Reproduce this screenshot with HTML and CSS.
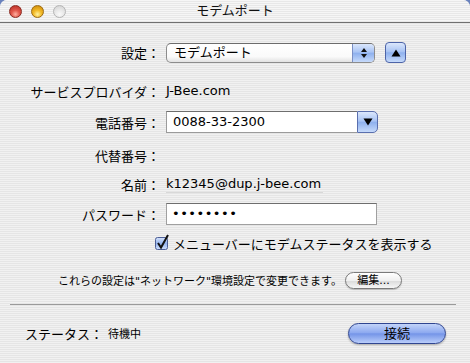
FILE: index.html
```html
<!DOCTYPE html>
<html lang="ja">
<head>
  <meta charset="UTF-8" />
  <title>モデムポート</title>
  <link rel="stylesheet" href="styles.css">
</head>
<body>
  <div class="window">
    <div class="titlebar">
      <div class="lights">
        <span class="light red"></span>
        <span class="light yellow"></span>
        <span class="light off"></span>
      </div>
      <div class="title">モデムポート</div>
      <div></div>
    </div>

    <div class="content">
      <div class="row r1">
        <span class="lbl">設定：</span>
        <div class="popup">
          <span class="popup-text">モデムポート</span>
          <span class="popup-arrows aqua">
            <svg width="8" height="12" viewBox="0 0 8 12"><path d="M4 1 L7 5 L1 5 Z M4 11 L7 7 L1 7 Z" fill="#111"/></svg>
          </span>
        </div>
        <span class="tri-btn aqua">
          <svg width="10" height="8" viewBox="0 0 10 8"><path d="M5 0.5 L9.5 7.5 L0.5 7.5 Z" fill="#000"/></svg>
        </span>
      </div>

      <div class="row r2">
        <span class="lbl">サービスプロバイダ：</span>
        <span class="val">J-Bee.com</span>
      </div>

      <div class="row r3">
        <span class="lbl">電話番号：</span>
        <div class="combo">
          <span class="combo-text">0088-33-2300</span>
          <span class="combo-btn aqua">
            <svg width="10" height="8" viewBox="0 0 10 8"><path d="M0.5 0.5 L9.5 0.5 L5 7.5 Z" fill="#000"/></svg>
          </span>
        </div>
      </div>

      <div class="row r4">
        <span class="lbl">代替番号：</span>
      </div>

      <div class="row r5">
        <span class="lbl">名前：</span>
        <span class="val name">k12345@dup.j-bee.com</span>
      </div>

      <div class="row r6">
        <span class="lbl">パスワード：</span>
        <div class="field">••••••••</div>
      </div>

      <div class="row r7">
        <svg class="check" width="15" height="16" viewBox="0 0 15 16">
          <defs>
            <linearGradient id="cb" x1="0" y1="0" x2="0" y2="1">
              <stop offset="0" stop-color="#d6e3fb"/>
              <stop offset="0.5" stop-color="#95b4ee"/>
              <stop offset="1" stop-color="#cfdffb"/>
            </linearGradient>
          </defs>
          <rect x="0.5" y="3.5" width="12" height="12" rx="2" fill="url(#cb)" stroke="#4d5f96"/>
          <path d="M3 9 L6 13.5 L13 1" fill="none" stroke="#111" stroke-width="2"/>
        </svg>
        <span>メニューバーにモデムステータスを表示する</span>
      </div>

      <div class="row r8">
        <span class="note">これらの設定は"ネットワーク"環境設定で変更できます。</span>
        <span class="small-btn">編集...</span>
      </div>

      <div class="sep"></div>

      <div class="row status">
        <span class="status-lbl">ステータス：</span>
        <span class="status-val">待機中</span>
        <span class="connect">接続</span>
      </div>
    </div>
  </div>
</body>
</html>
```

FILE: styles.css
```css
body {
  margin: 0;
  background: #6a82bd;
  font-family: "DejaVu Sans", "Noto Sans CJK JP", sans-serif;
  font-size: 13px;
  color: #000;
}

.window {
  width: 470px;
  height: 363px;
  border-radius: 7px 7px 0 0;
  overflow: hidden;
  background: repeating-linear-gradient(to bottom, #f1f1f1 0, #f1f1f1 1px, #e5e5e5 1px, #e5e5e5 2px);
}

.titlebar {
  height: 22px;
  border-bottom: 1px solid #707070;
  display: grid;
  grid-template-columns: 1fr auto 1fr;
  align-items: center;
  background: repeating-linear-gradient(to bottom, #f6f6f6 0, #f6f6f6 1px, #e8e8e8 1px, #e8e8e8 2px);
}

.title {
  line-height: 22px;
  color: #111;
}

.lights {
  display: flex;
  gap: 9px;
  padding-left: 9px;
  padding-top: 1px;
}

.light {
  width: 13px;
  height: 13px;
  border-radius: 50%;
  box-sizing: border-box;
}

.red {
  background: radial-gradient(circle at 50% 75%, #ffb0a0 0, #e2584c 40%, #b32a20 100%);
  border: 1px solid #8a2a22;
}

.yellow {
  background: radial-gradient(circle at 50% 75%, #fff2a0 0, #f2bb2a 40%, #c88200 100%);
  border: 1px solid #9c6a10;
}

.off {
  background: radial-gradient(circle at 50% 75%, #fafafa 0, #e6e6e6 50%, #cfcfcf 100%);
  border: 1px solid #b4b4b4;
}

.row {
  display: flex;
  align-items: center;
}

.lbl {
  width: 160px;
  flex: none;
  text-align: right;
  margin-right: 6px;
  white-space: nowrap;
}

.r1 { margin-top: 19px; height: 21px; }
.r2 { margin-top: 20px; height: 16px; }
.r3 { margin-top: 12px; height: 22px; }
.r4 { margin-top: 14px; height: 16px; }
.r5 { margin-top: 13px; height: 16px; }
.r6 { margin-top: 11px; height: 22px; }
.r7 { margin-top: 10px; height: 16px; padding-left: 155px; gap: 3px; }
.r8 { margin-top: 20px; height: 18px; padding-left: 58px; gap: 3px; }

.aqua {
  background: linear-gradient(to bottom, #dbe7fc 0%, #a9c4f4 45%, #8fb1ee 52%, #c6dafb 100%);
}

.popup {
  width: 209px;
  height: 20px;
  box-sizing: border-box;
  border: 1px solid #8c8c8c;
  border-top-color: #6c6c6c;
  border-radius: 5px;
  display: flex;
  overflow: hidden;
  background: linear-gradient(to bottom, #ffffff 0%, #fafafa 70%, #e2e2e2 100%);
}

.popup-text {
  flex: 1;
  padding-left: 7px;
  line-height: 18px;
}

.popup-arrows {
  width: 21px;
  border-left: 1px solid #7b8fc4;
  display: flex;
  align-items: center;
  justify-content: center;
}

.tri-btn {
  width: 21px;
  height: 21px;
  box-sizing: border-box;
  margin-left: 10px;
  border: 1px solid #4d64a8;
  border-radius: 4px;
  display: flex;
  align-items: center;
  justify-content: center;
}

.combo {
  width: 212px;
  height: 22px;
  display: flex;
}

.combo-text {
  flex: 1;
  box-sizing: border-box;
  background: #fff;
  border: 1px solid #9b9b9b;
  border-top-color: #6e6e6e;
  border-right: none;
  padding-left: 6px;
  line-height: 20px;
}

.combo-btn {
  width: 21px;
  box-sizing: border-box;
  border: 1px solid #5a6fae;
  border-radius: 0 5px 5px 0;
  display: flex;
  align-items: center;
  justify-content: center;
}

.val {
  line-height: 16px;
}

.name {
  border-bottom: 1px solid #d8d8d8;
  padding-right: 2px;
}

.field {
  width: 211px;
  height: 22px;
  box-sizing: border-box;
  background: #fff;
  border: 1px solid #a0a0a0;
  border-top-color: #6e6e6e;
  padding-left: 5px;
  line-height: 20px;
  letter-spacing: 0.5px;
}

.check {
  margin-top: -3px;
}

.note {
  font-size: 11px;
}

.small-btn {
  width: 57px;
  height: 17px;
  box-sizing: border-box;
  border: 1px solid #7a7a7a;
  border-radius: 9px;
  background: linear-gradient(to bottom, #ffffff 0%, #f0f0f0 50%, #dcdcdc 55%, #f6f6f6 100%);
  font-size: 11px;
  line-height: 15px;
  text-align: center;
  box-shadow: 0 1px 1px rgba(0,0,0,0.2);
}

.sep {
  margin: 15px 14px 0 10px;
  height: 1px;
  background: #9a9a9a;
}

.status {
  margin-top: 17px;
  height: 22px;
  padding-left: 25px;
}

.status-lbl {
  width: 83px;
}

.status-val {
  font-size: 11px;
}

.connect {
  margin-left: auto;
  margin-right: 24px;
  width: 98px;
  height: 21px;
  box-sizing: border-box;
  border: 1px solid #2f4590;
  border-radius: 11px;
  background: linear-gradient(to bottom, #c3d4f9 0%, #8eaaf0 45%, #7595e8 52%, #b9cdfa 100%);
  text-align: center;
  line-height: 19px;
  box-shadow: 0 1px 2px rgba(0,0,0,0.3);
}
```
